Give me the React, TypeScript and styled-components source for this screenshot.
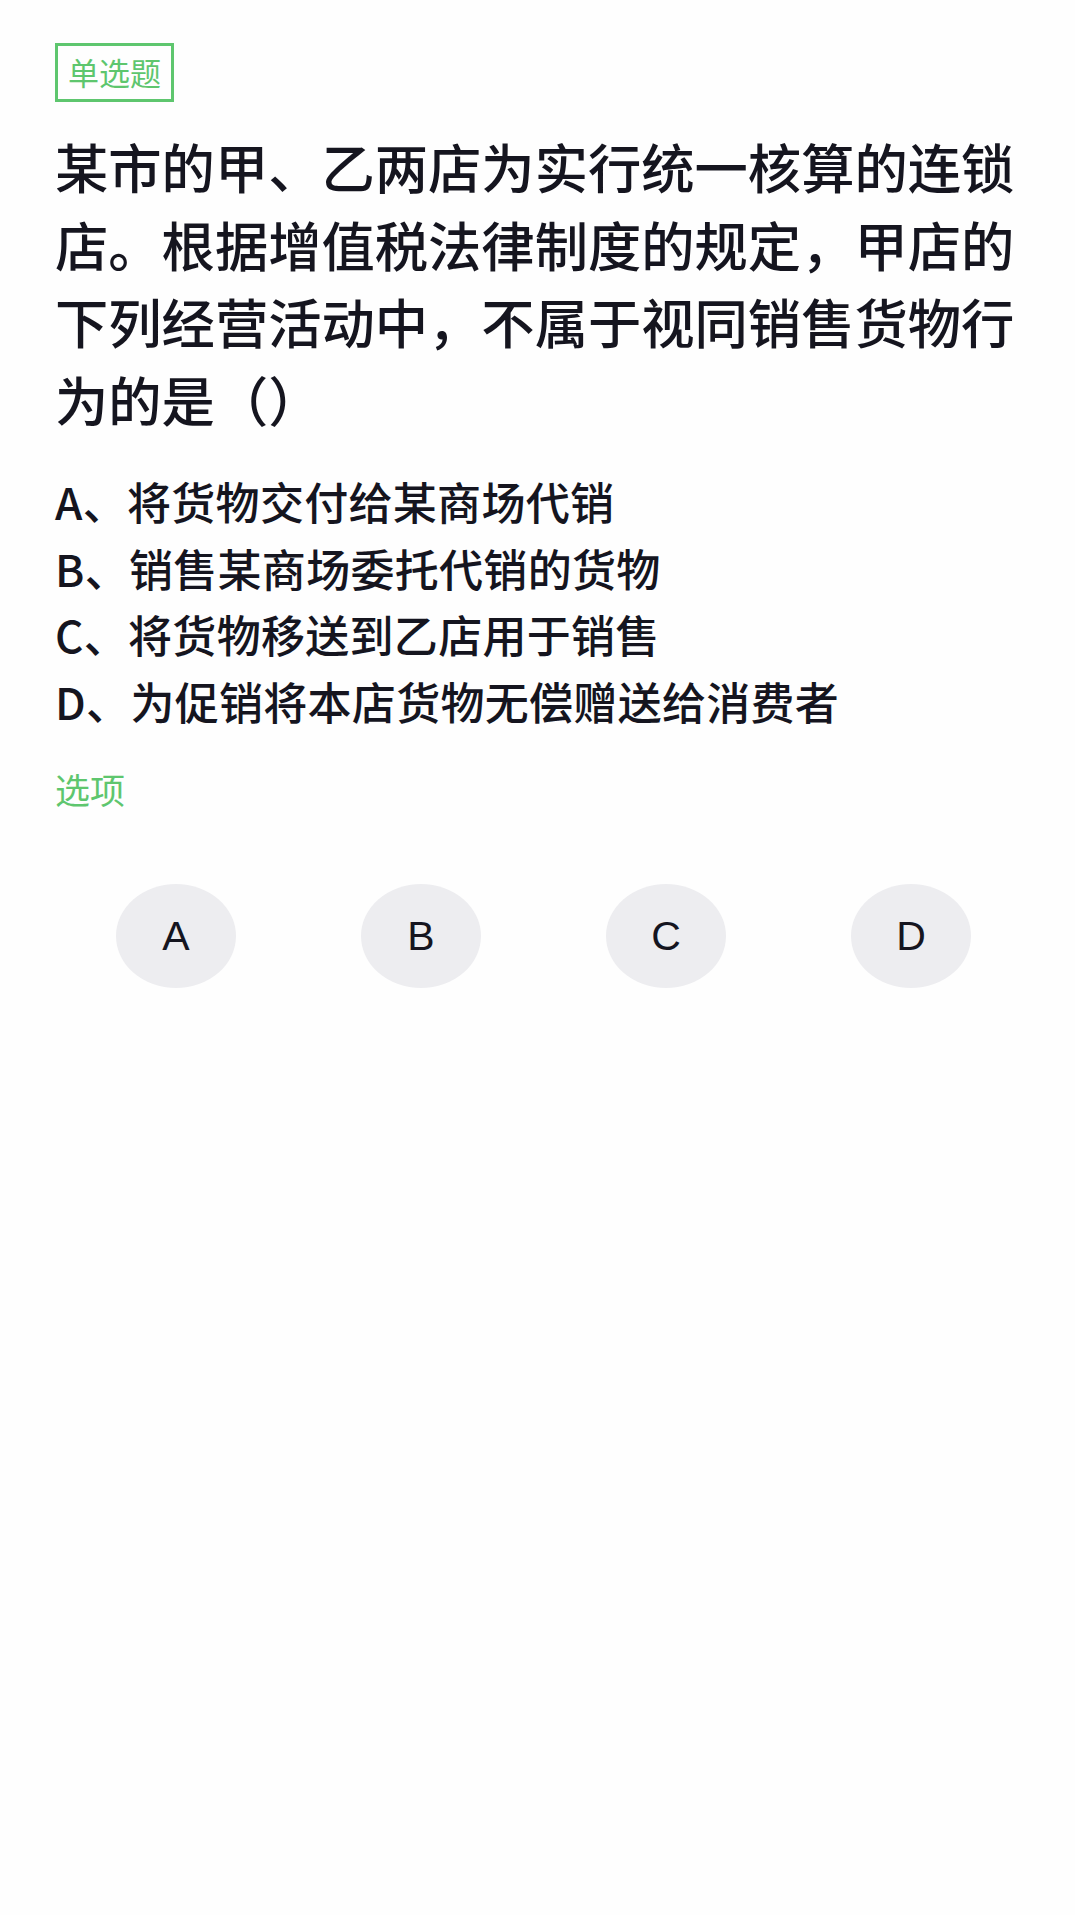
import React from 'react';
import styled, { createGlobalStyle } from 'styled-components';

const GREEN = '#5ec66e';
const INK = '#15151f';

const options = [
  { key: 'A', text: '将货物交付给某商场代销' },
  { key: 'B', text: '销售某商场委托代销的货物' },
  { key: 'C', text: '将货物移送到乙店用于销售' },
  { key: 'D', text: '为促销将本店货物无偿赠送给消费者' },
];

const GlobalStyle = createGlobalStyle`
  html, body {
    margin: 0;
    padding: 0;
    background: #fefefe;
  }
  body {
    font-family: "Noto Sans CJK SC", "Noto Sans", sans-serif;
    font-weight: 500;
    color: ${INK};
  }
`;

const App: React.FC = () => {
  return (
    <>
      <GlobalStyle />
      <Page>
        <TypeTag>单选题</TypeTag>
        <Question>
          某市的甲、乙两店为实行统一核算的连锁店。根据增值税法律制度的规定，甲店的下列经营活动中，不属于视同销售货物行为的是（）
        </Question>
        <OptionList>
          {options.map((o) => (
            <OptionRow key={o.key}>
              {o.key}、{o.text}
            </OptionRow>
          ))}
        </OptionList>
        <SectionLabel>选项</SectionLabel>
        <AnswerRow>
          {options.map((o) => (
            <AnswerButton key={o.key} type="button">
              {o.key}
            </AnswerButton>
          ))}
        </AnswerRow>
      </Page>
    </>
  );
};
export default App;

const Page = styled.div`
  min-height: 1915px;
  box-sizing: border-box;
  padding: 43px 55px 0 55px;
  display: flex;
  flex-direction: column;
  align-items: flex-start;
`;
const TypeTag = styled.div`
  box-sizing: border-box;
  height: 59px;
  padding: 0 10px;
  border: 3px solid ${GREEN};
  color: ${GREEN};
  font-size: 31px;
  font-weight: 400;
  line-height: 51px;
`;
const Question = styled.div`
  margin-top: 25px;
  font-size: 53.3px;
  line-height: 77.5px;
  width: 965px;
`;
const OptionList = styled.div`
  margin-top: 31px;
  display: flex;
  flex-direction: column;
`;
const OptionRow = styled.div`
  font-size: 44px;
  line-height: 66.5px;
  letter-spacing: 0.3px;
`;
const SectionLabel = styled.div`
  margin-top: 30px;
  font-size: 35px;
  font-weight: 400;
  line-height: 50px;
  color: ${GREEN};
`;
const AnswerRow = styled.div`
  margin-top: 70px;
  padding-left: 61px;
  display: flex;
  gap: 125px;
`;
const AnswerButton = styled.button`
  width: 120px;
  height: 104px;
  border: none;
  border-radius: 50%;
  background: #ededf0;
  color: ${INK};
  font-family: "Liberation Sans", "Noto Sans", sans-serif;
  font-size: 41px;
  padding: 0;
  display: flex;
  align-items: center;
  justify-content: center;
`;
